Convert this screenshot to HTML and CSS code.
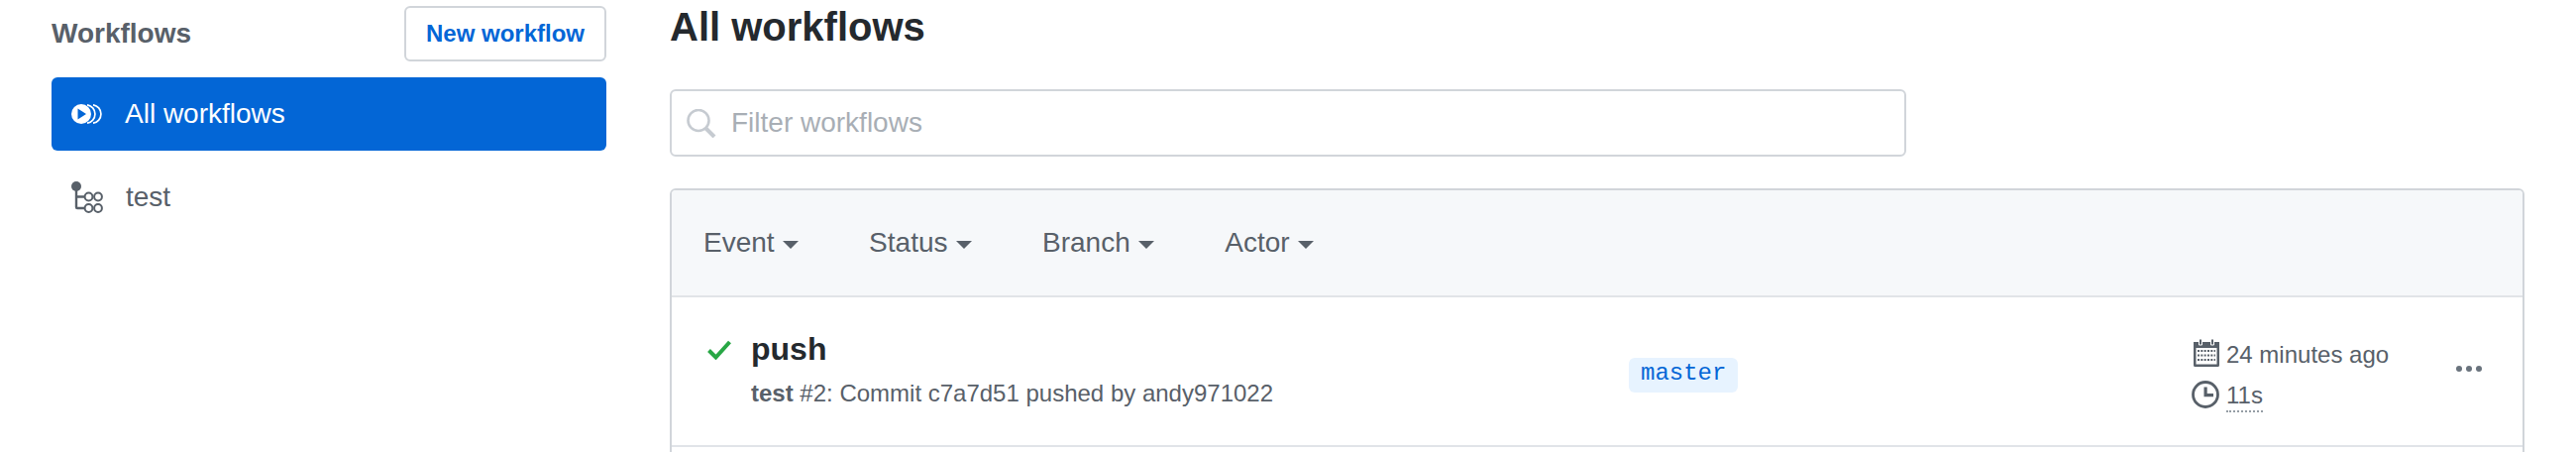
FILE: index.html
```html
<!DOCTYPE html>
<html lang="en">
<head>
    <meta charset="UTF-8">
    <title>All workflows</title>
    <link rel="stylesheet" href="styles.css">
</head>
<body>
    <div class="page">
        <aside class="sidebar">
            <div class="sidebar-head">
                <h2>Workflows</h2>
                <button class="btn">New workflow</button>
            </div>
            <a class="nav-item selected">
                <svg class="nav-icon" viewBox="0 0 32 20" width="32" height="20">
                    <circle cx="10" cy="10" r="10" fill="#fff"/>
                    <path d="M6.500 4.500v11L15 10z" fill="#0366d6"/>
                    <path d="M16 .8a9.300 9.300 0 0 1 0 18.400M22 .8a9.300 9.300 0 0 1 0 18.400" fill="none" stroke="#fff" stroke-width="1.700"/>
                </svg>
                <span>All workflows</span>
            </a>
            <a class="nav-item">
                <svg class="nav-icon" viewBox="0 0 33 32" width="33" height="32">
                    <circle cx="5" cy="5" r="5" fill="#586069"/>
                    <path d="M5 8v18a1 1 0 0 0 1 1h7M5 15.500h8" fill="none" stroke="#586069" stroke-width="2.400"/>
                    <g fill="none" stroke="#586069" stroke-width="2">
                        <circle cx="17.500" cy="15.500" r="3.900"/>
                        <circle cx="27" cy="15.500" r="3.900"/>
                        <circle cx="17.500" cy="27" r="3.900"/>
                        <circle cx="27" cy="27" r="3.900"/>
                    </g>
                </svg>
                <span>test</span>
            </a>
        </aside>
        <main class="content">
            <h1>All workflows</h1>
            <div class="filter">
                <svg viewBox="0 0 30 29" width="30" height="29">
                    <circle cx="12" cy="11.500" r="10.500" fill="none" stroke="#c6cbd1" stroke-width="2.600"/>
                    <path d="M19.500 19.500l8.500 8.500" fill="none" stroke="#c6cbd1" stroke-width="4"/>
                </svg>
                <span>Filter workflows</span>
            </div>
            <div class="box">
                <div class="box-head">
                    <span class="menu">Event<i class="caret"></i></span>
                    <span class="menu">Status<i class="caret"></i></span>
                    <span class="menu">Branch<i class="caret"></i></span>
                    <span class="menu">Actor<i class="caret"></i></span>
                </div>
                <div class="run">
                    <svg class="check" viewBox="0 0 24 20" width="24" height="20">
                        <path d="M1.500 10.500l7 7L22.500 2" fill="none" stroke="#28a745" stroke-width="4"/>
                    </svg>
                    <div class="run-main">
                        <div class="run-title">push</div>
                        <div class="run-meta"><b>test</b> #2: Commit c7a7d51 pushed by andy971022</div>
                    </div>
                    <div class="run-branch"><span class="branch">master</span></div>
                    <div class="run-time">
                        <div class="time-row">
                            <svg class="calendar" viewBox="0 0 26 28" width="26" height="28">
                                <path d="M0 3h26v23.500a1.500 1.500 0 0 1-1.500 1.500h-23A1.500 1.500 0 0 1 0 26.500zM2.500 9v16.500h21V9z" fill="#586069" fill-rule="evenodd"/>
                                <path d="M5.500 0h3v6h-3zM17.500 0h3v6h-3z" fill="#586069" stroke="#fff" stroke-width="1"/>
                                <path d="M4 12h18M4 16.500h18M4 21h18" stroke="#586069" stroke-width="2.200" stroke-dasharray="2 1.330"/>
                            </svg>
                            <span class="time-text">24 minutes ago</span>
                        </div>
                        <div class="time-row">
                            <svg viewBox="0 0 28 28" width="28" height="28">
                                <circle cx="14" cy="14" r="12.500" fill="none" stroke="#586069" stroke-width="2.800"/>
                                <path d="M12.500 6.500h3.200V13H22v3.200h-9.500z" fill="#586069"/>
                            </svg>
                            <span class="time-text duration">11s</span>
                        </div>
                    </div>
                    <div class="dots"><i></i><i></i><i></i></div>
                </div>
                <div class="run-next"></div>
            </div>
        </main>
    </div>
</body>
</html>
```

FILE: styles.css
```css
body {
    margin: 0;
    height: 456px;
    overflow: hidden;
    background-color: #fff;
    font-family: "Liberation Sans", Arial, sans-serif;
    font-size: 28px;
    color: #24292e;
}

.page {
    display: flex;
    padding-left: 52px;
    width: 2496px;
}

.sidebar {
    width: 560px;
    flex-shrink: 0;
    margin-right: 64px;
}

.sidebar-head {
    display: flex;
    justify-content: space-between;
    align-items: center;
    margin-top: 6px;
    margin-bottom: 16px;
}

.sidebar-head h2 {
    margin: 0;
    font-size: 28px;
    font-weight: bold;
    color: #586069;
}

.btn {
    width: 204px;
    height: 56px;
    background-color: #fff;
    border: 2px solid #d1d5da;
    border-radius: 6px;
    font-family: inherit;
    font-size: 24px;
    font-weight: bold;
    color: #0366d6;
}

.nav-item {
    display: flex;
    align-items: center;
    height: 74px;
    padding-left: 20px;
    margin-bottom: 10px;
    border-radius: 6px;
    color: #586069;
}

.nav-item.selected {
    background-color: #0366d6;
    color: #fff;
}

.nav-icon {
    margin-right: 22px;
    flex-shrink: 0;
}

.content {
    flex: 1;
}

.content h1 {
    margin: 0 0 36px;
    font-size: 40px;
    line-height: 54px;
    font-weight: bold;
}

.filter {
    display: flex;
    align-items: center;
    box-sizing: border-box;
    width: 1248px;
    height: 68px;
    border: 2px solid #d1d5da;
    border-radius: 6px;
    padding-left: 15px;
    margin-bottom: 32px;
    color: #a8aeb5;
    font-size: 28px;
}

.filter svg {
    margin-right: 15px;
}

.box {
    border: 2px solid #d1d5da;
    border-radius: 6px 6px 0 0;
}

.box-head {
    display: flex;
    align-items: center;
    height: 106px;
    padding-left: 32px;
    background-color: #f6f8fa;
    border-bottom: 2px solid #e1e4e8;
    border-radius: 4px 4px 0 0;
    color: #586069;
}

.menu {
    margin-right: 71.500px;
}

.caret {
    display: inline-block;
    margin-left: 8px;
    vertical-align: middle;
    border-top: 8px solid #586069;
    border-left: 8px solid transparent;
    border-right: 8px solid transparent;
}

.run {
    display: flex;
    align-items: flex-start;
    height: 149px;
    border-bottom: 2px solid #e1e4e8;
}

.check {
    margin: 43px 20px 0 36px;
}

.run-main {
    width: 886px;
    padding-top: 33px;
}

.run-title {
    font-size: 32px;
    line-height: 38px;
    font-weight: bold;
    margin-bottom: 11px;
}

.run-meta {
    font-size: 24px;
    line-height: 30px;
    color: #586069;
}

.run-branch {
    width: 568px;
    padding-top: 58px;
}

.branch {
    display: inline-block;
    background-color: #e7f3ff;
    color: #0366d6;
    font-family: "Liberation Mono", monospace;
    font-size: 24px;
    line-height: 32px;
    padding: 0 12px 3px;
    border-radius: 6px;
}

.run-time {
    display: flex;
    flex-direction: column;
    gap: 14px;
    width: 267px;
    padding-top: 42px;
    color: #586069;
    font-size: 24px;
}

.time-row {
    display: flex;
    align-items: center;
    gap: 7px;
    height: 28px;
}

.calendar {
    margin-left: 2px;
}

.time-text {
    padding-top: 4px;
}

.duration {
    padding-bottom: 1px;
    border-bottom: 2px dotted #959da5;
}

.dots {
    display: flex;
    gap: 4px;
    padding-top: 69px;
}

.dots i {
    width: 6px;
    height: 6px;
    border-radius: 50%;
    background-color: #6a737d;
}

.run-next {
    height: 20px;
}
```
